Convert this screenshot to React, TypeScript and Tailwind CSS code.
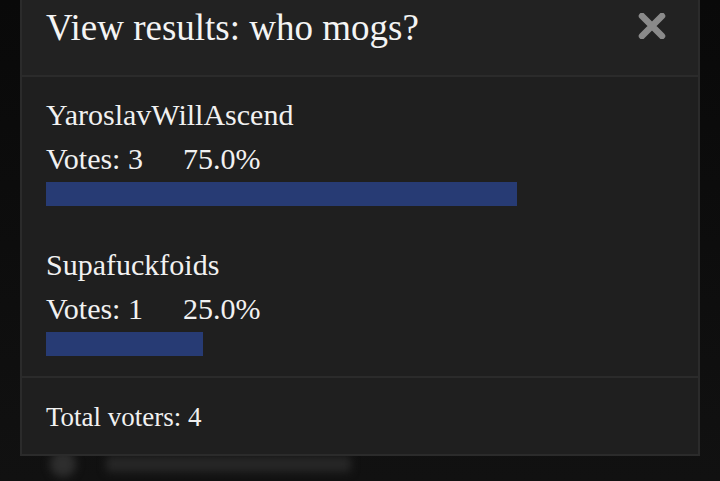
import React from 'react';

type Option = {
  name: string;
  votes: number;
};

const options: Option[] = [
  { name: 'YaroslavWillAscend', votes: 3 },
  { name: 'Supafuckfoids', votes: 1 },
];

const serif = { fontFamily: '"Liberation Serif", "DejaVu Serif", serif' };

function CloseIcon() {
  return (
    <svg width="28" height="26" viewBox="0 0 28 26" aria-hidden="true">
      <path
        d="M4 3 L24 23 M24 3 L4 23"
        stroke="#8a8a8a"
        strokeWidth="6.5"
        strokeLinecap="round"
        fill="none"
      />
    </svg>
  );
}

function ResultRow({ option, total }: { option: Option; total: number }) {
  const pct = (option.votes / total) * 100;
  return (
    <div className="mb-[37px] last:mb-0">
      <div className="text-[30px] leading-[44px] text-[#f1f1f1]">{option.name}</div>
      <div className="text-[30px] leading-[44px] text-[#f1f1f1]">
        <span>Votes: {option.votes}</span>
        <span className="ml-[40px]">{pct.toFixed(1)}%</span>
      </div>
      <div className="mt-[1px] h-[24px] w-full">
        <div className="h-full bg-[#273b74]" style={{ width: `${pct}%` }} />
      </div>
    </div>
  );
}

export default function App() {
  const total = options.reduce((sum, o) => sum + o.votes, 0);
  return (
    <div className="relative h-[481px] w-[720px] overflow-hidden bg-[#0c0c0c]" style={serif}>
      {/* page behind the dialog, blurred out */}
      <div className="flex h-full flex-col justify-end bg-gradient-to-b from-[#090909] to-[#111111]">
        <div className="flex items-center gap-[30px] pb-[4px] pl-[50px] blur-[4px]">
          <div className="h-[26px] w-[26px] rounded-full bg-[#2e2e2e]" />
          <div className="h-[16px] w-[245px] rounded bg-[#272727]" />
        </div>
      </div>

      <div className="absolute left-[20px] top-0 w-[680px] border-2 border-t-0 border-[#2b2b2b] bg-[#1f1f1f]">
        <div className="flex h-[77px] items-start justify-between border-b-2 border-[#2b2b2b] bg-[#222222] pl-[24px] pr-[32px] pt-[4px]">
          <h2 className="text-[37px] leading-[48px] text-[#f4f4f4]">View results: who mogs?</h2>
          <button type="button" aria-label="Close" className="mt-[9px]">
            <CloseIcon />
          </button>
        </div>

        <div className="border-b-2 border-[#2b2b2b] pb-[20px] pl-[24px] pr-[24px] pt-[16px]">
          {options.map((o) => (
            <ResultRow key={o.name} option={o} total={total} />
          ))}
        </div>

        <div className="flex h-[76px] items-center pl-[24px] pt-[2px]">
          <span className="text-[27px] leading-[36px] text-[#f1f1f1]">Total voters: {total}</span>
        </div>
      </div>
    </div>
  );
}
